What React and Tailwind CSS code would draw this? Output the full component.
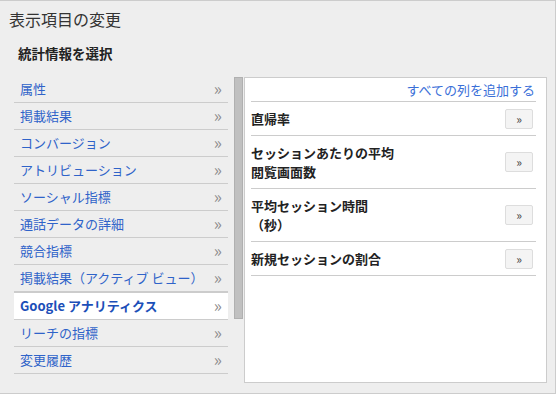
const categories = [
  '属性',
  '掲載結果',
  'コンバージョン',
  'アトリビューション',
  'ソーシャル指標',
  '通話データの詳細',
  '競合指標',
  '掲載結果（アクティブ ビュー）',
  'Google アナリティクス',
  'リーチの指標',
  '変更履歴',
  'ラベル',
]

const columns = [
  ['直帰率'],
  ['セッションあたりの平均', '閲覧画面数'],
  ['平均セッション時間', '（秒）'],
  ['新規セッションの割合'],
]

const selected = 'Google アナリティクス'

export default function App() {
  return (
    <div
      className="w-[556px] h-[394px] bg-[#eeeeee] border-t border-r border-b border-[#cccccc] text-[#333]"
      style={{ fontFamily: '"Noto Sans CJK JP", "Noto Sans", sans-serif' }}
    >
      <h1 className="pl-[9px] pt-[7px] text-[16px] leading-[22px] text-[#333]">表示項目の変更</h1>
      <h2 className="pl-[18px] pt-[13px] text-[13.5px] leading-[20px] font-bold text-[#222]">統計情報を選択</h2>

      <div className="flex mt-[13px] h-[306px]">
        {/* list clips the last row like the original scroller */}
        <ul className="ml-[14px] w-[214px] h-[305px] overflow-hidden">
          {categories.map(c => (
            <li
              key={c}
              className={
                c === selected
                  ? 'flex items-center justify-between h-[28px] border-t border-b border-[#cccccc] bg-white pl-[6px] pr-[6px]'
                  : 'flex items-center justify-between h-[27px] border-b border-[#cccccc] pl-[6px] pr-[6px]'
              }
            >
              <span
                className={
                  c === selected
                    ? 'text-[13px] font-bold text-[#1c4fb8] whitespace-nowrap'
                    : 'text-[13px] text-[#2f63c9] whitespace-nowrap'
                }
              >
                {c}
              </span>
              <span className="pb-[4px] text-[17px] leading-none text-[#8a8a8a]">»</span>
            </li>
          ))}
        </ul>

        <div className="ml-[6px] mt-[1px] w-[9px] h-[242px] bg-[#c0c0c0] border border-[#b0b0b0]" />

        <div className="ml-[1px] mt-[1px] w-[303px] h-[306px] bg-white border border-[#cccccc] pl-[6px] pr-[10px]">
          <div className="flex justify-end items-center h-[24px] border-b border-[#cccccc]">
            <a className="pr-[1px] text-[13px] text-[#3a6fd8]">すべての列を追加する</a>
          </div>
          {columns.map(lines => (
            <div key={lines[0]} className="flex items-center justify-between py-[7px] border-b border-[#cccccc]">
              <div className="text-[13px] leading-[19px] font-bold text-[#222]">
                {lines.map(l => (
                  <div key={l}>{l}</div>
                ))}
              </div>
              <button className="mr-[3px] -my-[1px] w-[28px] h-[20px] rounded-[2px] bg-[#f4f4f4] border border-[#dddddd] text-[12px] leading-none text-[#444]">
                »
              </button>
            </div>
          ))}
        </div>
      </div>
    </div>
  )
}
